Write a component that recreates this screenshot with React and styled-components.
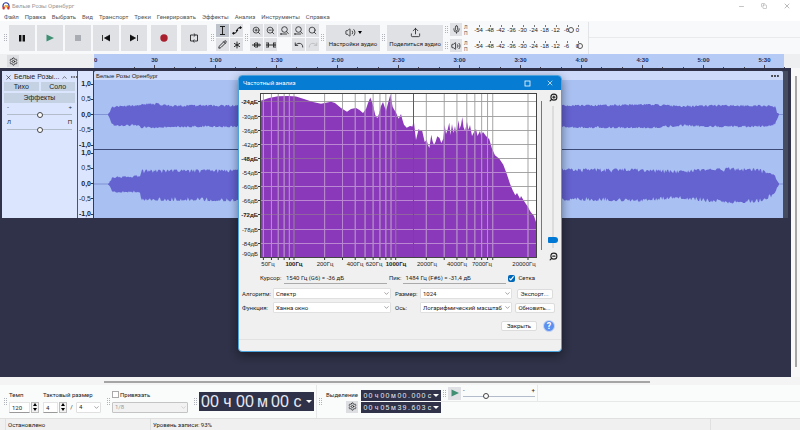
import styled, { createGlobalStyle } from "styled-components";
import { useState } from "react";
import {
  Asterisk,
  ChevronDown,
  ChevronUp,
  Copy,
  Ellipsis,
  Mic,
  Minus,
  Pencil,
  Redo,
  Search,
  Settings,
  Undo,
  Upload,
  Volume2,
  X,
  ZoomIn,
  ZoomOut,
} from "lucide-react";

const MENU = [
  "Файл",
  "Правка",
  "Выбрать",
  "Вид",
  "Транспорт",
  "Треки",
  "Генерировать",
  "Эффекты",
  "Анализ",
  "Инструменты",
  "Справка",
];
const TIMES = [
  "30",
  "1:00",
  "1:30",
  "2:00",
  "2:30",
  "3:00",
  "3:30",
  "4:00",
  "4:30",
  "5:00",
  "5:30",
];
const LEVELS = ["-54", "-48", "-42", "-36", "-30", "-24", "-18", "-12", "-6", "0"];
const AMPS = ["1,0", "0,5", "0,0", "-0,5", "-1,0"];

// [x, height above the centre line, height below it]
const LEFT_ENVELOPE = [
  [14, 0, 0],
  [18, 7, 9],
  [20, 8, 11],
  [46, 9, 11],
  [47, 10, 13],
  [62, 11, 13],
  [74, 9, 12],
  [150, 9, 12],
  [470, 9, 12],
  [490, 9, 13],
  [560, 10, 13],
  [588, 8, 11],
  [620, 9, 12],
  [670, 9, 12],
  [682, 8, 10],
  [684, 3, 5],
  [686, 0, 0],
];
const RIGHT_ENVELOPE = [
  [14, 0, 0],
  [18, 6, 7],
  [22, 7, 8],
  [46, 8, 8],
  [47, 14, 16],
  [150, 14, 17],
  [470, 15, 16],
  [550, 15, 17],
  [586, 13, 14],
  [600, 14, 16],
  [635, 16, 19],
  [665, 15, 18],
  [678, 11, 13],
  [682, 8, 8],
  [684, 3, 4],
  [686, 0, 0],
];

const SPECTRUM =
  "0,8 9,5 18,3.3 28,3 36,3.5 44,6 53,9 61,10.7 66,9.7 71,8.7 75,10 81,15 87,18.7 91,16 96,15 99.5,17 103,20 106,16 108,10 110.3,4.5 112,9 113.7,15 115.3,22 117.3,25.3 119.3,20 121,13 123,9 126,18 128.3,9 130.3,1.7 132.7,14 136,19.7 138.7,25.7 141,21 142.5,27 144,31.7 146.7,34.7 150,33 152.5,33.5 153.7,27 156,47 158.7,35.7 160,38 162,37 164.7,49 166.7,47 168,52 169.3,55 171.3,41.7 172.5,48 174,51.7 175.5,49 177.3,43.3 179.5,45 181.3,50 183.3,45.7 184.7,32.3 186,41 187.5,37 189.3,29.7 190.5,42 192,31 193.5,40 195,33 196.3,41 198.7,27.3 199.5,36 201,32 202.3,24 203.5,34 205,38 207,29 208.5,37 210,32 212,43 214,39 216,36 217.5,43 220,38 221,42 223,39 226,43 229.3,46.3 232,55.7 235,62.3 239.3,65.7 243.3,71.7 246.7,80.7 250,90.7 252.7,97.3 255.3,102.3 257,100 260,105.7 261,103 264,108 267.3,113 270.7,119 274,123 276,129 276,164";

const DB_LINES = [8, 23, 37, 51, 65, 79, 93, 107, 121, 136, 150];
const HZ_LINES = [
  50, 60, 70, 80, 90, 100, 200, 300, 400, 500, 600, 700, 800, 900, 1000, 2000,
  3000, 4000, 5000, 6000, 7000, 8000, 9000, 20000,
];
const HZ_LABELS = [
  ["50Гц", 8],
  ["100Гц", 34, true],
  ["200Гц", 65],
  ["400Гц", 95],
  ["620Гц", 114],
  ["1000Гц", 136, true],
  ["2000Гц", 167],
  ["4000Гц", 197],
  ["7000Гц", 222],
  ["20000Гц", 264],
];
const hzToX = (hz) => 34 + 101.7 * Math.log10(hz / 100);

const makeWave = (points, mid, seed) => {
  let state = seed;
  const random = () => {
    state = (state * 16807) % 2147483647;
    return state / 2147483647;
  };
  const top = [];
  const bottom = [];
  for (let x = 14; x <= 686; x += 1) {
    const next = Math.max(1, points.findIndex((p) => p[0] >= x));
    const [x0, up0, down0] = points[next - 1];
    const [x1, up1, down1] = points[next];
    const t = (x - x0) / (x1 - x0);
    const up = up0 + (up1 - up0) * t;
    const down = down0 + (down1 - down0) * t;
    const loose = up > 11 ? 4 : 2;
    top.push(`${x},${(mid - Math.max(0, up - random() ** 2 * loose + 0.6)).toFixed(1)}`);
    bottom.unshift(`${x},${(mid + Math.max(0, down - random() ** 2 * loose + 0.6)).toFixed(1)}`);
  }
  return [...top, ...bottom].join(" ");
};

function Wave({ points, seed }) {
  return (
    <WaveBox viewBox="0 0 690 68" preserveAspectRatio="none">
      <line x1="0" x2="690" y1="34" y2="34" stroke="#6f7fc4" strokeWidth="0.7" />
      <polygon points={makeWave(points, 34, seed)} fill="#6463d0" />
    </WaveBox>
  );
}

function Meter({ label, icon, peak }) {
  return (
    <MeterRow>
      <Grip />
      <MeterButton aria-label={label}>{icon}</MeterButton>
      <Channels>
        <span>Л</span>
        <span>П</span>
      </Channels>
      <Scale>
        {LEVELS.map((level) => (
          <Level key={level}>{level}</Level>
        ))}
        <Peak $x={peak} />
      </Scale>
    </MeterRow>
  );
}

function Picker({ id, value, muted }) {
  return (
    <PickerBox $muted={muted}>
      <select id={id} aria-label={id ? undefined : value} disabled={muted}>
        <option>{value}</option>
      </select>
      <ChevronDown size={7} strokeWidth={2} />
    </PickerBox>
  );
}

function Spinner({ name }) {
  return (
    <SpinnerBox>
      <button aria-label={`${name} +`}>
        <svg width="4" height="3" viewBox="0 0 4 3">
          <path d="M0 3L2 0L4 3Z" />
        </svg>
      </button>
      <button aria-label={`${name} -`}>
        <svg width="4" height="3" viewBox="0 0 4 3">
          <path d="M0 0L2 3L4 0Z" />
        </svg>
      </button>
    </SpinnerBox>
  );
}

function Spectrum() {
  return (
    <svg width="300" height="178" viewBox="-20 -2 300 178" fontFamily="Liberation Sans, Arial, sans-serif" fontSize="6">
      <defs>
        <clipPath id="under">
          <polygon points={`0,164 ${SPECTRUM}`} />
        </clipPath>
      </defs>
      <rect x="0.5" y="0.5" width="276" height="164" fill="#fff" />
      <polygon points={`0,164 ${SPECTRUM}`} fill="#8b39bb" />
      {[false, true].map((inside) => (
        <g
          key={String(inside)}
          stroke={inside ? "#bd86d8" : "#9b9b9b"}
          strokeWidth="0.9"
          clipPath={inside ? "url(#under)" : undefined}
        >
          {DB_LINES.map((y) => (
            <line
              key={y}
              x1="0"
              x2="277"
              y1={y + 0.5}
              y2={y + 0.5}
              stroke={inside && [8, 65, 121].includes(y) ? "#8f5f9f" : undefined}
            />
          ))}
          {HZ_LINES.map((hz) => (
            <line
              key={hz}
              x1={hzToX(hz)}
              x2={hzToX(hz)}
              y1="0"
              y2="164"
              stroke={inside && (hz === 100 || hz === 1000) ? "#8f5f9f" : undefined}
            />
          ))}
        </g>
      ))}
      <line x1="153.5" x2="153.5" y1="0" y2="164" stroke="#c8284a" strokeWidth="1" />
      <rect x="0.5" y="0.5" width="276" height="164" fill="none" stroke="#444" />
      {DB_LINES.map((y, i) => (
        <g key={y}>
          <line x1="-2" x2="0" y1={y + 0.5} y2={y + 0.5} stroke="#333" />
          <text x="-2" y={y + 3} textAnchor="end" fontWeight={i % 4 === 0 ? 700 : 400} fill="#222">
            {-24 - i * 6}дБ
          </text>
        </g>
      ))}
      <text x="-2" y="163" textAnchor="end" fill="#222">
        -90дБ
      </text>
      {HZ_LINES.map((hz) => (
        <line key={hz} x1={hzToX(hz)} x2={hzToX(hz)} y1="165" y2="167" stroke="#333" />
      ))}
      {HZ_LABELS.map(([text, x, strong]) => (
        <text key={text} x={x} y="173" textAnchor="middle" fontWeight={strong ? 700 : 400} fill="#222">
          {text}
        </text>
      ))}
    </svg>
  );
}

function AnalysisDialog() {
  const [grid, setGrid] = useState(true);
  return (
    <Dialog role="dialog" aria-label="Частотный анализ">
      <DialogTitle>
        <span>Частотный анализ</span>
        <button aria-label="Развернуть">
          <svg width="7" height="7" viewBox="0 0 7 7">
            <rect x="1" y="1" width="5" height="5" fill="none" stroke="#fff" strokeWidth="0.8" />
          </svg>
        </button>
        <button aria-label="Закрыть окно">
          <X size={8} />
        </button>
      </DialogTitle>
      <PlotRow>
        <Spectrum />
        <PlotScroll />
        <ZoomColumn>
          <ZoomIn size={9} strokeWidth={3} />
          <input type="range" aria-label="Масштаб" defaultValue="4" />
          <ZoomOut size={9} strokeWidth={3} />
        </ZoomColumn>
      </PlotRow>
      <ReadoutRow>
        <label htmlFor="cursor">Курсор:</label>
        <input id="cursor" readOnly value="1540 Гц (G6) = -36 дБ" />
        <label htmlFor="peak">Пик:</label>
        <input id="peak" readOnly value="1484 Гц (F#6) = -31,4 дБ" />
        <CheckLabel>
          <input type="checkbox" checked={grid} onChange={() => setGrid(!grid)} />
          Сетка
        </CheckLabel>
      </ReadoutRow>
      <OptionGrid>
        <label htmlFor="algorithm">Алгоритм:</label>
        <Picker id="algorithm" value="Спектр" />
        <label htmlFor="size">Размер:</label>
        <Picker id="size" value="1024" />
        <DialogButton $wide={36}>Экспорт...</DialogButton>
        <label htmlFor="window">Функция:</label>
        <Picker id="window" value="Ханна  окно" />
        <label htmlFor="axis">Ось:</label>
        <Picker id="axis" value="Логарифмический масштаб" />
        <DialogButton $wide={40}>Обновить...</DialogButton>
      </OptionGrid>
      <DialogFooter>
        <DialogButton $wide={36}>Закрыть</DialogButton>
        <HelpButton aria-label="Справка по окну">?</HelpButton>
      </DialogFooter>
    </Dialog>
  );
}

function TimeText({ text, big }) {
  return (
    <TimeBox $big={big}>
      {[...text].map((char, i) => (
        <TimeCell key={i} $big={big} $unit={/[чмс]/.test(char)} $dot={char === "."}>
          {char}
        </TimeCell>
      ))}
      <svg width="6" height="3" viewBox="0 0 6 3">
        <path d="M0 0L3 3L6 0Z" fill="#fff" />
      </svg>
    </TimeBox>
  );
}

function FitIcon() {
  return (
    <svg width="9" height="9" viewBox="0 0 9 9" fill="none" stroke="#222" strokeWidth="0.8">
      <circle cx="4.5" cy="3.5" r="2.8" />
      <path d="M6.5 5.5L8.5 7.8M0.5 8H7M1.5 7L0.5 8L1.5 9" />
    </svg>
  );
}

export default function App() {
  return (
    <Window>
      <GlobalStyle />
      <TitleBar>
        <svg width="8" height="8" viewBox="0 0 16 16">
          <path d="M2 10V7.5A6 6 0 0 1 14 7.5V10" fill="none" stroke="#2b3a9c" strokeWidth="2.4" />
          <path d="M5 9L7 6L8 11L10 6L12 10" fill="none" stroke="#f2a71b" strokeWidth="2" />
          <rect x="1" y="9" width="4.5" height="6" rx="1.5" fill="#d4342c" />
          <rect x="10.5" y="9" width="4.5" height="6" rx="1.5" fill="#d4342c" />
        </svg>
        <h1>Белые Розы Оренбург</h1>
        <button aria-label="Свернуть">
          <Minus size={7} />
        </button>
        <button aria-label="Восстановить">
          <Copy size={6} />
        </button>
        <button aria-label="Закрыть программу">
          <X size={8} />
        </button>
      </TitleBar>
      <MenuBar>
        {MENU.map((item) => (
          <button key={item}>{item}</button>
        ))}
      </MenuBar>
      <Toolbar>
        <Grip />
        <Transport>
          <BigButton aria-label="Пауза">
            <svg width="8" height="8" viewBox="0 0 8 8">
              <path d="M1 1H3.4V7.5H1ZM4.6 1H7V7.5H4.6Z" fill="#111" />
            </svg>
          </BigButton>
          <BigButton aria-label="Воспроизвести">
            <svg width="8" height="8" viewBox="0 0 8 8">
              <path d="M0.5 0.5L8 4L0.5 7.5Z" fill="#3f8f72" />
            </svg>
          </BigButton>
          <BigButton aria-label="Стоп">
            <svg width="8" height="8" viewBox="0 0 8 8">
              <rect x="1" y="1" width="6" height="6" fill="#a9acb2" />
            </svg>
          </BigButton>
          <BigButton aria-label="К началу">
            <svg width="8" height="8" viewBox="0 0 8 8">
              <path d="M0.5 1V7M8 1L2.5 4L8 7Z" fill="#111" stroke="#111" strokeWidth="0.8" />
            </svg>
          </BigButton>
          <BigButton aria-label="К концу">
            <svg width="8" height="8" viewBox="0 0 8 8">
              <path d="M7.5 1V7M0 1L5.5 4L0 7Z" fill="#111" stroke="#111" strokeWidth="0.8" />
            </svg>
          </BigButton>
          <BigButton aria-label="Запись" $apart>
            <svg width="8" height="8" viewBox="0 0 8 8">
              <circle cx="4" cy="4" r="3.7" fill="#a8202e" />
            </svg>
          </BigButton>
          <BigButton aria-label="Цикл" $apart>
            <svg width="10" height="10" viewBox="0 0 10 10" fill="none" stroke="#222" strokeWidth="0.9">
              <path d="M3.5 8H1.5V2H6M4.8 0.5L6.5 2L4.8 3.5M6.5 2H8.5V8H4M5.2 6.5L3.7 8L5.2 9.5" />
            </svg>
          </BigButton>
        </Transport>
        <Grip />
        <ToolGrid $columns={2}>
          <SmallButton aria-label="Выделение" $active>
            <svg width="9" height="9" viewBox="0 0 9 9" fill="none" stroke="#111">
              <path d="M2 0.5H7M2 8.5H7M4.5 0.5V8.5" strokeWidth="0.9" />
            </svg>
          </SmallButton>
          <SmallButton aria-label="Огибающая">
            <svg width="10" height="9" viewBox="0 0 10 9" stroke="#111" fill="#111">
              <path d="M1 7.5Q5 7.5 5 4.5T9 1.5" fill="none" strokeWidth="0.9" />
              <circle cx="1.5" cy="7.3" r="0.8" />
              <circle cx="5" cy="4.5" r="0.6" />
              <circle cx="8.5" cy="1.6" r="0.8" />
            </svg>
          </SmallButton>
          <SmallButton aria-label="Карандаш">
            <Pencil size={9} strokeWidth={2.4} />
          </SmallButton>
          <SmallButton aria-label="Мультиинструмент">
            <Asterisk size={12} strokeWidth={2} />
          </SmallButton>
        </ToolGrid>
        <Grip />
        <ToolGrid $columns={5}>
          <SmallButton aria-label="Приблизить">
            <ZoomIn size={9} />
          </SmallButton>
          <SmallButton aria-label="Отдалить">
            <ZoomOut size={9} />
          </SmallButton>
          <SmallButton aria-label="Уместить выделение">
            <FitIcon />
          </SmallButton>
          <SmallButton aria-label="Уместить проект">
            <FitIcon />
          </SmallButton>
          <SmallButton aria-label="Переключить масштаб">
            <Search size={9} />
          </SmallButton>
          <SmallButton aria-label="Обрезать">
            <svg width="9" height="8" viewBox="0 0 9 8" stroke="#333">
              <path d="M0 4H9M2.5 2V6M4 1V7M5.5 1.5V6.5M7 2.5V5.5" />
            </svg>
          </SmallButton>
          <SmallButton aria-label="Тишина">
            <svg width="10" height="8" viewBox="0 0 10 8" stroke="#333">
              <path d="M0 4H10M1 1V7M2.5 1.5V6.5M7.5 1.5V6.5M9 1V7" />
            </svg>
          </SmallButton>
          <span />
          <SmallButton aria-label="Отменить">
            <Undo size={10} />
          </SmallButton>
          <SmallButton aria-label="Повторить" disabled>
            <Redo size={10} />
          </SmallButton>
        </ToolGrid>
        <Grip />
        <WideButton $wide={54}>
          <span>
            <Volume2 size={11} strokeWidth={1.8} />
            <svg width="4" height="3" viewBox="0 0 4 3">
              <path d="M0 0L2 3L4 0Z" />
            </svg>
          </span>
          Настройки аудио
        </WideButton>
        <Grip />
        <WideButton $wide={56}>
          <span>
            <Upload size={11} strokeWidth={1.8} />
          </span>
          Поделиться аудио
        </WideButton>
        <Meters>
          <Meter label="Уровень записи" icon={<Mic size={9} />} peak={98} />
          <Meter label="Уровень воспроизведения" icon={<Volume2 size={10} />} peak={107} />
        </Meters>
        <ToolbarRest />
      </Toolbar>
      <TimelineRow>
        <TimelineHead>
          <GearButton aria-label="Настройки шкалы">
            <Settings size={9} />
          </GearButton>
        </TimelineHead>
        <Timeline>
          <ZeroMark>0</ZeroMark>
          {TIMES.map((time) => (
            <TimeMark key={time}>{time}</TimeMark>
          ))}
        </Timeline>
      </TimelineRow>
      <Workspace>
        <Tracks>
          <TrackPanel>
            <PanelTitle>
              <X size={7} />
              <span>Белые Розы...</span>
              <ChevronUp size={7} />
              <Ellipsis size={8} />
            </PanelTitle>
            <PanelButtons>
              <button>Тихо</button>
              <button>Соло</button>
              <button>Эффекты</button>
            </PanelButtons>
            <PanelSlider>
              <span>-</span>
              <span>+</span>
              <Slider type="range" aria-label="Громкость" defaultValue="50" />
            </PanelSlider>
            <PanelSlider>
              <span>Л</span>
              <span>П</span>
              <Slider type="range" aria-label="Баланс" defaultValue="50" />
            </PanelSlider>
          </TrackPanel>
          <AmpRuler>
            {[0, 1].map((channel) => (
              <AmpScale key={channel}>
                {AMPS.map((amp) => (
                  <Amp key={amp} $strong={!amp.includes("5")}>
                    {amp}
                  </Amp>
                ))}
              </AmpScale>
            ))}
          </AmpRuler>
          <Clip>
            <ClipTitle>
              <span>Белые Розы Оренбург</span>
              <Ellipsis size={10} strokeWidth={3} />
            </ClipTitle>
            <Wave points={LEFT_ENVELOPE} seed={71} />
            <Wave points={RIGHT_ENVELOPE} seed={913} />
          </Clip>
          <TrackTail />
        </Tracks>
        <VerticalScroll />
      </Workspace>
      <HorizontalScroll />
      <BottomBar>
        <Grip />
        <Field>
          <label htmlFor="tempo">Темп</label>
          <FieldLine>
            <NumberInput id="tempo" defaultValue="120" $wide={21} />
            <Spinner name="Темп" />
          </FieldLine>
        </Field>
        <Field>
          <label htmlFor="upper">Тактовый размер</label>
          <FieldLine>
            <NumberInput id="upper" defaultValue="4" $wide={15} />
            <Spinner name="Доли" />
            <Slash>/</Slash>
            <Narrow>
              <Picker value="4" />
            </Narrow>
          </FieldLine>
        </Field>
        <Grip />
        <Field $wide={76}>
          <SnapLabel>
            <input type="checkbox" />
            Привязать
          </SnapLabel>
          <Picker value="1/8" muted />
        </Field>
        <Grip />
        <TimeText text="00ч00м00с" big />
        <Divider />
        <Grip />
        <SelectionHead>
          <span>Выделение</span>
          <GearButton aria-label="Настройки выделения">
            <Settings size={9} />
          </GearButton>
        </SelectionHead>
        <TimePair>
          <TimeText text="00ч00м00.000с" />
          <TimeText text="00ч05м39.603с" />
        </TimePair>
        <SpeedBar>
          <Grip />
          <SmallButton aria-label="Воспроизвести на скорости">
            <svg width="8" height="8" viewBox="0 0 8 8">
              <path d="M0.5 0.5L8 4L0.5 7.5Z" fill="#3f8f72" />
            </svg>
          </SmallButton>
          <SpeedSlider>
            <span>-</span>
            <span>+</span>
            <Slider type="range" aria-label="Скорость" defaultValue="31" />
          </SpeedSlider>
        </SpeedBar>
        <BottomRest />
      </BottomBar>
      <StatusBar>
        <span>Остановлено</span>
        <span>Уровень записи: 93%</span>
        <span />
      </StatusBar>
      <AnalysisDialog />
    </Window>
  );
}

const GlobalStyle = createGlobalStyle`
  * {
    box-sizing: border-box;
  }
  body {
    margin: 0;
    font-family: Roboto, "Open Sans", sans-serif;
    font-size: 6px;
    line-height: 8px;
    color: #222;
  }
  button, input, select {
    margin: 0;
    padding: 0;
    border: none;
    font: inherit;
    color: inherit;
    background: none;
    outline: none;
  }
  svg {
    display: block;
    flex: none;
  }
`;

const Window = styled.div`
  position: relative;
  display: flex;
  flex-direction: column;
  min-height: 100vh;
  background-color: #f9fafb;
`;
const TitleBar = styled.header`
  display: flex;
  align-items: center;
  height: 12px;
  padding: 0 9px 0 2px;
  background-color: #fff;
  color: #999;
  h1 {
    flex: 1;
    margin: 0 0 0 2px;
    font-size: 6px;
    font-weight: 400;
  }
  button {
    margin-left: 16px;
  }
`;
const MenuBar = styled.nav`
  display: flex;
  align-items: center;
  gap: 6px;
  height: 9px;
  padding-left: 4px;
  background-color: #fff;
  color: #555;
`;

const Toolbar = styled.div`
  display: flex;
  align-items: center;
  height: 33px;
  padding-left: 2px;
  background-color: #f8f9fa;
`;
const Grip = styled.i`
  flex: none;
  width: 3px;
  height: 7px;
  margin: 0 2px;
  background: conic-gradient(from 270deg at 1px 1px, #b0b3ba 90deg, transparent 0) 0 0 / 2px 2px;
`;
const Transport = styled.div`
  display: flex;
  gap: 2px;
  padding-right: 2px;
`;
const BigButton = styled.button`
  display: flex;
  justify-content: center;
  align-items: center;
  width: 26px;
  height: 26px;
  margin-left: ${(props) => (props.$apart ? "2px" : "0")};
  background-color: #dfe1e5;
`;
const ToolGrid = styled.div`
  display: grid;
  grid-template-columns: repeat(${(props) => props.$columns}, 13px);
  gap: 1px;
`;
const SmallButton = styled.button`
  display: flex;
  justify-content: center;
  align-items: center;
  flex: none;
  width: 13px;
  height: 13px;
  background-color: ${(props) => (props.$active ? "#bfc3cc" : "#dfe1e5")};
  &:disabled {
    color: #bbb;
  }
`;
const WideButton = styled.button`
  display: flex;
  flex-direction: column;
  justify-content: center;
  align-items: center;
  gap: 2px;
  width: ${(props) => props.$wide}px;
  height: 26px;
  background-color: #dfe1e5;
  span {
    display: flex;
    align-items: center;
    gap: 2px;
  }
`;
const Meters = styled.div`
  display: flex;
  flex-direction: column;
  width: 146px;
  border-right: 1px solid #e2e4e7;
`;
const MeterRow = styled.div`
  display: flex;
  align-items: center;
  height: 16px;
`;
const MeterButton = styled(SmallButton)`
  width: 12px;
`;
const Channels = styled.div`
  display: flex;
  flex-direction: column;
  width: 11px;
  padding-left: 2px;
  font-size: 5px;
  line-height: 6px;
  color: #555;
`;
const Scale = styled.div`
  position: relative;
  display: flex;
  font-family: "Liberation Sans", Arial, sans-serif;
`;
const Level = styled.span`
  width: 11px;
  padding-top: 1px;
  text-align: center;
  background: linear-gradient(#777, #777) 6px 0 / 1px 2px no-repeat;
`;
const Peak = styled.i`
  position: absolute;
  top: 2px;
  left: ${(props) => props.$x - 3}px;
  width: 6px;
  height: 6px;
  border: 1px solid #555;
  border-radius: 50%;
`;
const ToolbarRest = styled.div`
  flex: 1;
  height: 17px;
  margin-bottom: 16px;
  border-bottom: 1px solid #e8eaec;
`;

const TimelineRow = styled.div`
  display: flex;
  height: 14px;
  background-color: #eeeff1;
`;
const TimelineHead = styled.div`
  display: flex;
  align-items: center;
  width: 94px;
  padding-left: 7px;
`;
const GearButton = styled.button`
  display: flex;
  justify-content: center;
  align-items: center;
  width: 12px;
  height: 12px;
  background-color: #dcdee2;
`;
const Timeline = styled.div`
  display: flex;
  flex: 1;
  overflow: hidden;
  font-family: "Liberation Sans", Arial, sans-serif;
  font-weight: 700;
  line-height: 13px;
  color: #1e2c55;
  background: linear-gradient(to right, #b6caf6 690px, transparent 690px);
`;
const ZeroMark = styled.span`
  flex: none;
  width: 30px;
`;
const TimeMark = styled.span`
  flex: none;
  width: 61px;
  text-align: center;
  background: linear-gradient(#445, #445) 30px 100% / 1px 3px no-repeat,
    linear-gradient(#445, #445) 10px 100% / 1px 1px no-repeat,
    linear-gradient(#445, #445) 50px 100% / 1px 1px no-repeat;
`;

const Workspace = styled.main`
  display: flex;
  flex: 1;
  background-color: #2f3248;
`;
const Tracks = styled.div`
  display: flex;
  flex: 1;
  align-self: flex-start;
  padding: 3px 3px 0 2px;
`;
const TrackPanel = styled.section`
  width: 76px;
  height: 147px;
  padding: 1px 3px;
  border-right: 1px solid #4b546e;
  background-color: #dbe6fe;
  font-family: "Liberation Sans", Arial, sans-serif;
`;
const PanelTitle = styled.div`
  display: flex;
  align-items: center;
  gap: 2px;
  height: 10px;
  font-size: 7px;
  span {
    flex: 1;
    white-space: nowrap;
  }
`;
const PanelButtons = styled.div`
  display: grid;
  grid-template-columns: 1fr 1fr;
  gap: 2px;
  margin: 0 -1px 1px;
  button {
    height: 9px;
    font-size: 7px;
    background-color: #c4d2e3;
  }
  button:last-child {
    grid-column: span 2;
    height: 10px;
  }
`;
const PanelSlider = styled.div`
  display: flex;
  flex-wrap: wrap;
  justify-content: space-between;
  height: 15px;
  padding: 0 2px;
  line-height: 6px;
`;
const Slider = styled.input`
  appearance: none;
  width: 100%;
  height: 6px;
  background: linear-gradient(#b3bccb, #b3bccb) 0 50% / 100% 1px no-repeat;
  &::-webkit-slider-thumb {
    appearance: none;
    width: 6px;
    height: 6px;
    border: 1px solid #444;
    border-radius: 50%;
    background-color: #fff;
  }
`;
const AmpRuler = styled.div`
  display: flex;
  flex-direction: column;
  justify-content: flex-end;
  width: 16px;
  border-right: 1px solid #333a55;
  background-color: #dbe6fe;
`;
const AmpScale = styled.div`
  display: flex;
  flex-direction: column;
  justify-content: space-between;
  height: 69px;
  font-family: "Liberation Sans", Arial, sans-serif;
  font-size: 7px;
`;
const Amp = styled.span`
  padding-right: 2px;
  text-align: right;
  font-weight: ${(props) => (props.$strong ? 700 : 400)};
  background: linear-gradient(#333, #333) 100% 50% / 2px 1px no-repeat;
`;
const Clip = styled.div`
  display: flex;
  flex-direction: column;
  flex: 1;
  height: 147px;
  border-radius: 2px 2px 0 0;
  overflow: hidden;
  background-color: #a9c1f2;
`;
const ClipTitle = styled.div`
  display: flex;
  justify-content: space-between;
  align-items: center;
  height: 9px;
  padding: 0 3px 0 2px;
  font-family: "Liberation Sans", Arial, sans-serif;
  background-color: #cddafa;
`;
const WaveBox = styled.svg`
  width: 100%;
  height: 69px;
  & + & {
    border-top: 1px solid #3c4a78;
  }
`;
const TrackTail = styled.div`
  width: 5px;
  background-color: #454c60;
`;
const VerticalScroll = styled.div`
  width: 9px;
  background: linear-gradient(#a5a5a5, #a5a5a5) 4px 8px / 2px calc(100% - 18px) no-repeat #f8f8f8;
`;
const HorizontalScroll = styled.div`
  height: 8px;
  background: linear-gradient(#a5a5a5, #a5a5a5) 104px 4px / 546px 2px no-repeat #f3f4f3;
`;

const BottomBar = styled.div`
  display: flex;
  align-items: center;
  height: 33px;
  padding-left: 2px;
  background-color: #fafbfb;
`;
const Field = styled.div`
  display: flex;
  flex-direction: column;
  gap: 3px;
  width: ${(props) => (props.$wide ? `${props.$wide}px` : "auto")};
  margin-right: 4px;
`;
const FieldLine = styled.div`
  display: flex;
  align-items: center;
  gap: 1px;
`;
const NumberInput = styled.input`
  width: ${(props) => props.$wide}px;
  height: 11px;
  padding-left: 2px;
  border: 1px solid #e4e4e4;
  border-bottom-color: #999;
  background-color: #fff;
`;
const SpinnerBox = styled.div`
  display: flex;
  flex-direction: column;
  width: 8px;
  height: 11px;
  border: 1px solid #bbb;
  background-color: #f2f2f2;
  button {
    display: flex;
    justify-content: center;
    align-items: center;
    flex: 1;
  }
`;
const Slash = styled.span`
  width: 7px;
  text-align: center;
`;
const Narrow = styled.div`
  width: 25px;
`;
const PickerBox = styled.div`
  position: relative;
  select {
    display: block;
    appearance: none;
    width: 100%;
    height: 11px;
    padding-left: 2px;
    border: 1px solid ${(props) => (props.$muted ? "#c4c4c4" : "#e0e0e0")};
    border-radius: 1px;
    white-space: pre;
    color: ${(props) => (props.$muted ? "#999" : "#222")};
    background-color: ${(props) => (props.$muted ? "#f2f2f2" : "#fff")};
    opacity: 1;
  }
  svg {
    position: absolute;
    top: 2px;
    right: 1px;
    color: ${(props) => (props.$muted ? "#bbb" : "#666")};
    pointer-events: none;
  }
`;
const CheckLabel = styled.label`
  display: flex;
  align-items: center;
  gap: 3px;
  input {
    width: 7px;
    height: 7px;
    accent-color: #0067b8;
  }
`;
const SnapLabel = styled(CheckLabel)`
  gap: 1px;
  input {
    appearance: none;
    border: 1px solid #aaa;
    background-color: #fff;
  }
  input:checked {
    background-color: #0067b8;
  }
`;
const TimeBox = styled.div`
  display: flex;
  align-items: center;
  height: ${(props) => (props.$big ? 19 : 11)}px;
  padding: 0 2px;
  font-family: "Liberation Sans", Arial, sans-serif;
  font-size: ${(props) => (props.$big ? 16 : 7)}px;
  color: #e8eaf4;
  background-color: #2f3248;
`;
const cellWidth = ({ $big, $unit, $dot }) => {
  if ($dot) return 4;
  if ($big) return $unit ? 17 : 9;
  return $unit ? 7 : 5;
};
const TimeCell = styled.span`
  width: ${cellWidth}px;
  text-align: center;
`;
const Divider = styled.i`
  width: 1px;
  height: 100%;
  margin-left: 2px;
  background-color: #e6e8ea;
`;
const SelectionHead = styled.div`
  display: flex;
  flex-direction: column;
  align-items: flex-end;
  gap: 2px;
  width: 34px;
`;
const TimePair = styled.div`
  display: flex;
  flex-direction: column;
  gap: 1px;
  margin-left: 3px;
`;
const SpeedBar = styled.div`
  display: flex;
  align-items: center;
  align-self: flex-start;
  height: 17px;
  border-right: 1px solid #e6e8ea;
  border-bottom: 1px solid #e6e8ea;
`;
const SpeedSlider = styled(PanelSlider)`
  width: 76px;
  height: 12px;
`;
const BottomRest = styled.div`
  flex: 1;
  align-self: flex-start;
  height: 17px;
  border-bottom: 1px solid #e6e8ea;
`;
const StatusBar = styled.footer`
  display: flex;
  height: 12px;
  padding-left: 5px;
  border-top: 1px solid #e0e0e0;
  background-color: #f0f0f0;
  line-height: 11px;
  span {
    padding-left: 2px;
    border-left: 1px solid #e0e0e0;
  }
  span:nth-child(1) {
    width: 145px;
  }
  span:nth-child(2) {
    flex: 1;
  }
  span:nth-child(3) {
    width: 90px;
  }
`;

const Dialog = styled.section`
  position: absolute;
  top: 75px;
  left: 0;
  right: 0;
  width: 324px;
  margin: 0 auto;
  border: 1px solid #4da3dc;
  border-radius: 4px;
  overflow: hidden;
  background-color: #f0f0f0;
  box-shadow: 0 3px 10px rgba(0, 0, 0, 0.45);
`;
const DialogTitle = styled.header`
  display: flex;
  align-items: center;
  height: 14px;
  padding: 0 7px 0 4px;
  color: #fff;
  background-color: #067cd2;
  span {
    flex: 1;
  }
  button {
    margin-left: 15px;
  }
`;
const PlotRow = styled.div`
  display: flex;
  padding: 1px 2px 0 1px;
`;
const PlotScroll = styled.i`
  width: 1px;
  height: 149px;
  margin: 10px 0 0 1px;
  background-color: #777;
`;
const ZoomColumn = styled.div`
  display: flex;
  flex-direction: column;
  align-items: center;
  gap: 4px;
  width: 10px;
  margin-left: 6px;
  padding-top: 2px;
  svg {
    transform: scaleX(-1);
  }
  input {
    appearance: none;
    writing-mode: vertical-lr;
    direction: rtl;
    width: 10px;
    height: 142px;
    background: linear-gradient(#dcdcdc, #dcdcdc) 50% 0 / 2px 100% no-repeat;
  }
  input::-webkit-slider-thumb {
    appearance: none;
    width: 10px;
    height: 6px;
    border-radius: 1px 3px 3px 1px;
    background-color: #0078d4;
  }
`;
const ReadoutRow = styled.div`
  display: flex;
  align-items: center;
  gap: 2px;
  height: 12px;
  padding-left: 21px;
  margin-top: 3px;
  label:first-child {
    width: 22px;
  }
  > input {
    width: 103px;
    height: 11px;
    padding-left: 2px;
    border-bottom: 1px solid #aaa;
  }
`;
const OptionGrid = styled.div`
  display: grid;
  grid-template-columns: 31px 118px 29px 92px 1fr;
  row-gap: 3px;
  align-items: center;
  margin-top: 4px;
  padding: 0 4px 0 3px;
  label:nth-of-type(even) {
    padding-left: 4px;
  }
  > button {
    justify-self: center;
  }
`;
const DialogButton = styled.button`
  width: ${(props) => props.$wide}px;
  height: 10px;
  border: 1px solid #dcdcdc;
  border-radius: 2px;
  background-color: #fdfdfd;
`;
const DialogFooter = styled.footer`
  display: flex;
  justify-content: flex-end;
  align-items: center;
  gap: 6px;
  height: 27px;
  padding-right: 6px;
  margin-bottom: 11px;
  border-bottom: 1px solid #e2e2e2;
`;
const HelpButton = styled.button`
  width: 12px;
  height: 12px;
  border: 1px solid #c9d8f0;
  border-radius: 50%;
  font-size: 9px;
  font-weight: 700;
  line-height: 10px;
  color: #fff;
  background-color: #5b8ff0;
`;
